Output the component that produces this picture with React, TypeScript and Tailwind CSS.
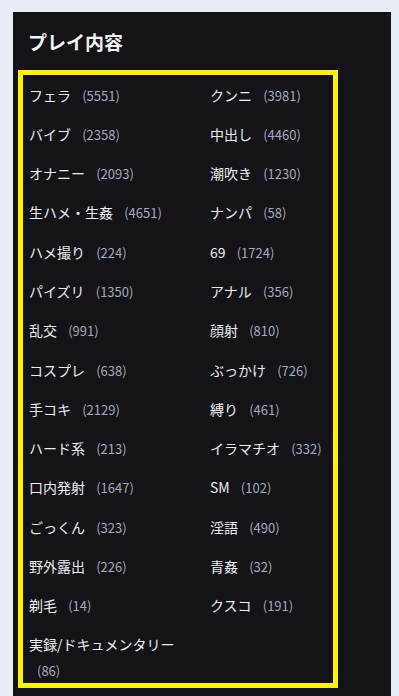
// Play-content tag list — dark card with a two-column grid of tags and counts

const TAGS: [string, number][] = [
  ["フェラ", 5551],
  ["クンニ", 3981],
  ["バイブ", 2358],
  ["中出し", 4460],
  ["オナニー", 2093],
  ["潮吹き", 1230],
  ["生ハメ・生姦", 4651],
  ["ナンパ", 58],
  ["ハメ撮り", 224],
  ["69", 1724],
  ["パイズリ", 1350],
  ["アナル", 356],
  ["乱交", 991],
  ["顔射", 810],
  ["コスプレ", 638],
  ["ぶっかけ", 726],
  ["手コキ", 2129],
  ["縛り", 461],
  ["ハード系", 213],
  ["イラマチオ", 332],
  ["口内発射", 1647],
  ["SM", 102],
  ["ごっくん", 323],
  ["淫語", 490],
  ["野外露出", 226],
  ["青姦", 32],
  ["剃毛", 14],
  ["クスコ", 191],
  ["実録/ドキュメンタリー", 86],
];

export default function App() {
  return (
    <div
      className="min-h-[696px] bg-[#e9edf5] pt-[12px] pl-[13px] pr-[8px]"
      style={{ fontFamily: '"Noto Sans CJK JP", "Noto Sans", sans-serif' }}
    >
      <div className="min-h-[684px] bg-[#141318] pl-[5px] pt-[20px]">
        {/* Section title */}
        <h2 className="pl-[10px] text-[19px] font-bold leading-[20px] text-[#f2f2f2]">
          プレイ内容
        </h2>

        {/* Tag grid, outlined in yellow */}
        <div className="mt-[18px] w-[320px] border-[5px] border-[#fff200] pl-[6px]">
          <ul className="grid grid-cols-[172px_1fr] gap-x-[9px]">
            {TAGS.map(([label, count], i) => {
              // the last tag wraps onto two lines and sits a little tighter
              const last = i === TAGS.length - 1;
              return (
                <li
                  key={label}
                  className={
                    last
                      ? "-mt-[2px] pt-[7.65px] text-[14px] leading-[26px] text-[#ececec]"
                      : "py-[7.65px] text-[14px] leading-[24px] text-[#ececec]"
                  }
                >
                  <span className="leading-none">{label}</span>{" "}
                  <span className="ml-[8px] text-[13px] leading-none text-[#a3abb8]">
                    ({count})
                  </span>
                </li>
              );
            })}
          </ul>
        </div>
      </div>
    </div>
  );
}
